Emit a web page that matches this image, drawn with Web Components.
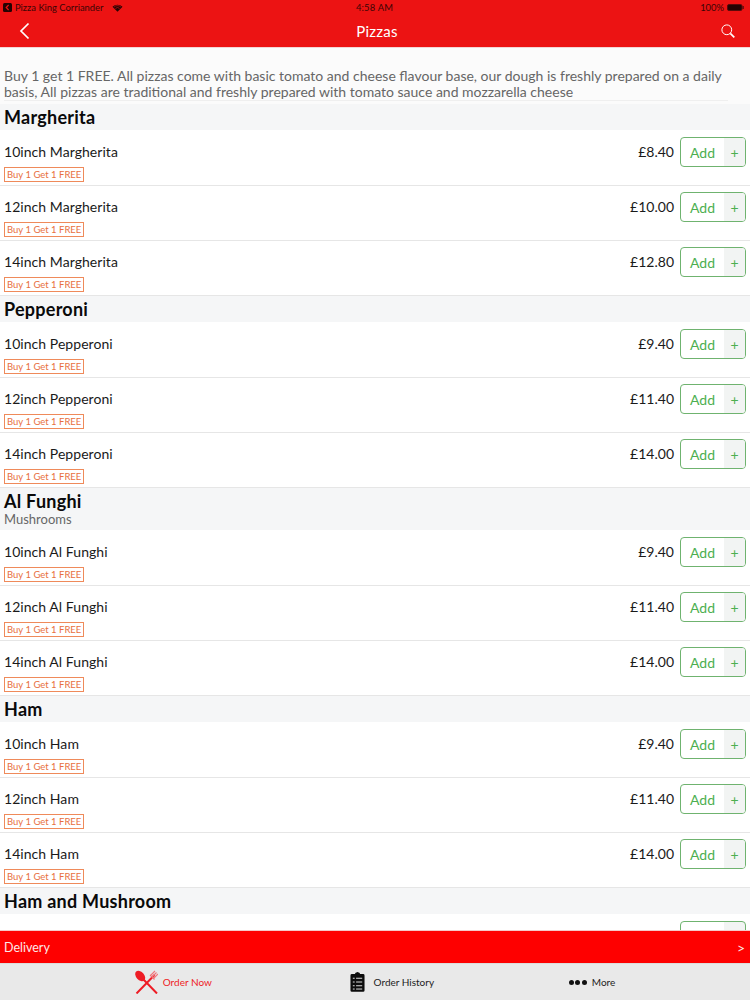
<!DOCTYPE html>
<html><head><meta charset="utf-8"><title>Pizzas</title>
<style>
html,body{margin:0;padding:0;background:#fff}
body{font-family:Lato,"Liberation Sans",sans-serif;width:750px;height:1000px;overflow:hidden}
</style></head><body>
<app-shell>
<top-bar slot="top" title-text="Pizzas"></top-bar>
<p-intro>Buy 1 get 1 FREE. All pizzas come with basic tomato and cheese flavour base, our dough is freshly prepared on a daily basis, All pizzas are traditional and freshly prepared with tomato sauce and mozzarella cheese</p-intro>
<menu-section name="Margherita">
<menu-row name="10inch Margherita" price="£8.40"></menu-row><menu-row name="12inch Margherita" price="£10.00"></menu-row><menu-row name="14inch Margherita" price="£12.80"></menu-row>
</menu-section>
<menu-section name="Pepperoni">
<menu-row name="10inch Pepperoni" price="£9.40"></menu-row><menu-row name="12inch Pepperoni" price="£11.40"></menu-row><menu-row name="14inch Pepperoni" price="£14.00"></menu-row>
</menu-section>
<menu-section name="Al Funghi" sub="Mushrooms">
<menu-row name="10inch Al Funghi" price="£9.40"></menu-row><menu-row name="12inch Al Funghi" price="£11.40"></menu-row><menu-row name="14inch Al Funghi" price="£14.00"></menu-row>
</menu-section>
<menu-section name="Ham">
<menu-row name="10inch Ham" price="£9.40"></menu-row><menu-row name="12inch Ham" price="£11.40"></menu-row><menu-row name="14inch Ham" price="£14.00"></menu-row>
</menu-section>
<menu-section name="Ham and Mushroom">
<menu-peek></menu-peek>
</menu-section>
<delivery-bar slot="bottom"></delivery-bar>
<tab-bar slot="bottom"></tab-bar>
</app-shell>
<script>
function el(name, css, html){
  customElements.define(name, class extends HTMLElement{
    connectedCallback(){
      if(this.shadowRoot) return;
      const a=k=>this.getAttribute(k)||'';
      this.attachShadow({mode:'open'}).innerHTML='<style>'+css+'</style>'+(typeof html==='function'?html(a):html);
    }
  });
}
el('app-shell',`:host{display:flex;flex-direction:column;width:750px;height:1000px;overflow:hidden}
.main{flex:1;min-height:0;overflow:hidden}`,
`<slot name="top"></slot><div class="main"><slot></slot></div><slot name="bottom"></slot>`);

el('top-bar',`:host{display:block;height:47px;background:#ec1313;border-bottom:1px solid #f3d6d6;color:#fff}
.status{height:15px;display:grid;grid-template-columns:1fr auto 1fr;align-items:center;font:9.400px Lato,"Liberation Sans",sans-serif;color:#3a0505;padding:0 6px 0 3px}
.l{display:flex;align-items:center;gap:3px}
.m{position:relative;left:1px;letter-spacing:.2px}
.r{display:flex;justify-content:flex-end;align-items:center;gap:3px}
.nav{height:31px;display:grid;grid-template-columns:52px 1fr 48px;align-items:center}
.t{text-align:center;font:15px Lato,"Liberation Sans",sans-serif;letter-spacing:.2px}
.back{padding-left:19px;display:flex}
.s{display:flex;justify-content:flex-end;padding-right:15px}
svg{display:block}`,
a=>`<div class="status"><div class="l"><svg width="9" height="9" viewBox="0 0 9 9"><rect width="9" height="9" rx="1.5" fill="#240303"/><path d="M5.600 2 3.200 4.500 5.600 7" fill="none" stroke="#ec1313" stroke-width="1.200"/></svg><span>Pizza King Corriander</span><svg style="margin-left:6px" width="11" height="8" viewBox="0 0 12 9"><path d="M6 8.600 .4 3A8 8 0 0 1 11.600 3Z" fill="#240303"/><path d="M2.200 3.400A5.300 5.300 0 0 1 9.800 3.400" fill="none" stroke="#ec1313" stroke-width=".7"/><path d="M3.700 5.100A3.100 3.100 0 0 1 8.300 5.100" fill="none" stroke="#ec1313" stroke-width=".7"/></svg></div><div class="m">4:58 AM</div><div class="r"><span>100%</span><svg width="17" height="7" viewBox="0 0 17 7"><rect x=".5" y=".5" width="14.500" height="6" rx="1.500" fill="#240303" stroke="#5a0a0a"/><rect x="15.500" y="2" width="1.300" height="3" fill="#5a0a0a"/></svg></div></div>
<div class="nav"><div class="back"><svg width="11" height="18" viewBox="0 0 11 18"><path d="M9.500 1.500 2 9l7.500 7.500" fill="none" stroke="#fff" stroke-width="1.700"/></svg></div><div class="t">${a('title-text')}</div><div class="s"><svg width="14" height="14" viewBox="0 0 14 14"><circle cx="5.800" cy="5.800" r="4.900" fill="none" stroke="#fff" stroke-width="1"/><path d="M9.300 9.300 13.300 13.300" stroke="#fff" stroke-width="1.700"/></svg></div></div>`);

el('p-intro',`:host{display:block;box-sizing:border-box;height:56px;padding:20px 4px 0;background:#fbfbfb;color:#666;font:14px/16px Lato,"Liberation Sans",sans-serif}
.b{width:724px;height:32px;border-bottom:1px solid #efefef}`,`<div class="b"><slot></slot></div>`);

el('menu-section',`:host{display:block}
.h{background:#f5f6f7;padding:3px 4px 2px;border-top:1px solid #e6e6e6}
:host(:first-of-type) .h{border-top:0}
.n{font:700 18px/21px Lato,"Liberation Sans",sans-serif;color:#0a0a0a;letter-spacing:.25px}
.sub{font:13px/15px Lato,"Liberation Sans",sans-serif;color:#666;margin-bottom:1px}`,
a=>`<div class="h"><div class="n">${a('name')}</div>${a('sub')?`<div class="sub">${a('sub')}</div>`:''}</div><slot></slot>`);

el('menu-row',`:host{display:flex;box-sizing:border-box;height:55px;background:#fff;border-top:1px solid #e6e6e6;padding:6px 4px 0;justify-content:space-between}
:host(:first-child){border-top-color:#fff}
.n{font:14px/30px Lato,"Liberation Sans",sans-serif;color:#1a1a1a;letter-spacing:.05px}
.tag{display:block;box-sizing:border-box;height:15px;border:1px solid #ef8a5a;color:#e8703e;font:9.500px/13px Lato,"Liberation Sans",sans-serif;padding:0 2px}
.left{display:flex;flex-direction:column;align-items:flex-start}
.right{display:flex;gap:6px;align-items:flex-start;height:30px}
.p{font:14px/30px Lato,"Liberation Sans",sans-serif;color:#1a1a1a}`,
a=>`<div class="left"><div class="n">${a('name')}</div><span class="tag">Buy 1 Get 1 FREE</span></div><div class="right"><span class="p">${a('price')}</span><add-btn></add-btn></div>`);

el('menu-peek',`:host{display:flex;justify-content:flex-end;box-sizing:border-box;height:55px;background:#fff;padding:7px 4px 0}
.f{box-sizing:border-box;width:66px;height:30px;border:1px solid #6fb36f;border-radius:4px;background:linear-gradient(90deg,#fff 43px,#f2f4f3 43px)}`,
`<div class="f"></div>`);

el('add-btn',`:host{display:flex;box-sizing:border-box;width:66px;height:30px;border:1px solid #6fb36f;border-radius:4px;overflow:hidden;background:#fff;color:#4caf50}
.a{flex:1;text-align:center;font:14px/29px Lato,"Liberation Sans",sans-serif}
.p{width:21px;background:#f2f4f3;text-align:center;font:14px/29px Lato,"Liberation Sans",sans-serif}`,
`<span class="a">Add</span><span class="p">+</span>`);

el('delivery-bar',`:host{display:flex;justify-content:space-between;align-items:center;box-sizing:border-box;height:33px;background:#fe0000;color:#fde8e8;font:12.500px/16px Lato,"Liberation Sans",sans-serif;padding:2px 5px 0 4px;border-top:1px solid #f4c8c8}
.g{font-size:14px}`,`<span>Delivery</span><span class="g">&gt;</span>`);

el('tab-bar',`:host{display:flex;justify-content:space-evenly;height:37px;background:#e9e9e9;align-items:center;font:10px Lato,"Liberation Sans",sans-serif;color:#222;border-top:1px solid #dcdcdc;box-sizing:border-box}
.t{display:flex;align-items:center}
.r{color:#ee1c25;gap:5px}
.h{gap:9px;margin-left:3px}.m{gap:5px}
svg{display:block}
.d{display:flex;gap:1.500px}.d i{width:5px;height:5px;border-radius:50%;background:#111;display:block}`,
`<div class="t r"><svg width="23" height="24" viewBox="0 0 23 24"><ellipse cx="5.200" cy="6" rx="4" ry="6" transform="rotate(-42 5.200 6)" fill="#ee1c25"/><path d="M8 9 22 23.500M19.500 5 1.500 23.500" stroke="#ee1c25" stroke-width="2" fill="none"/><path d="M15.500 5.500 20 1M17 7 21.500 2.500M18.500 8.500 23 4M15 5 19.500 9.500" stroke="#f0757a" stroke-width="1.100" fill="none"/></svg><span>Order Now</span></div>
<div class="t h"><svg width="15" height="22" viewBox="0 0 16 22"><path d="M5.500 2.500V1.500L8 .3l2.500 1.200v1h3.500a1.500 1.500 0 0 1 1.500 1.500v16a1.500 1.500 0 0 1-1.500 1.500H2A1.500 1.500 0 0 1 .5 20V4A1.500 1.500 0 0 1 2 2.500Z" fill="#0d0d0d"/><path d="M3 7h2M6.500 7h6.500M3 11h2M6.500 11h6.500M3 15h2M6.500 15h6.500M3 18.500h2M6.500 18.500h6.500" stroke="#e9e9e9" stroke-width="1"/></svg><span>Order History</span></div>
<div class="t m"><span class="d"><i></i><i></i><i></i></span><span>More</span></div>`);
</script>
</body></html>
